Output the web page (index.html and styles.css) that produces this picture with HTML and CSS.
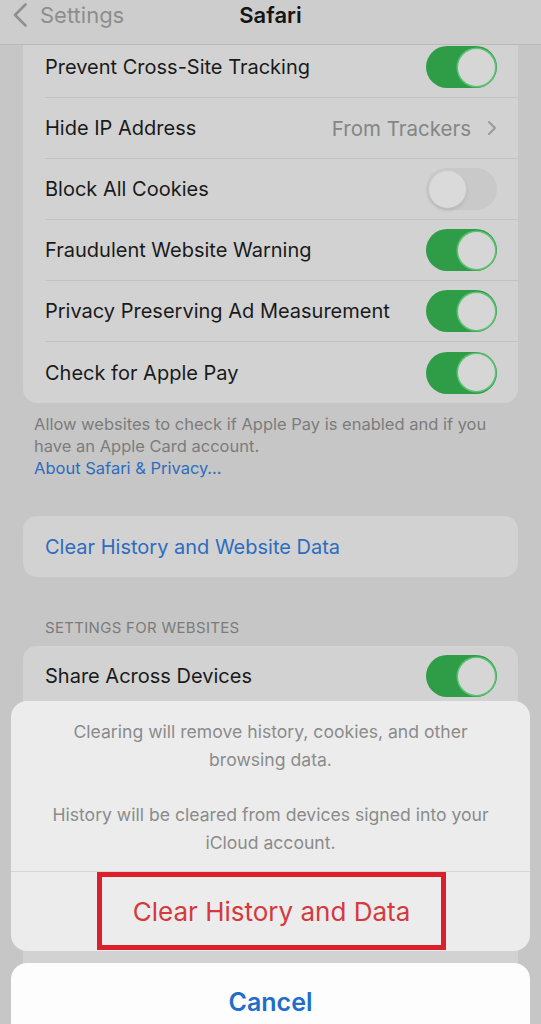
FILE: index.html
```html
<!DOCTYPE html>
<html lang="en">
<head>
<meta charset="utf-8">
<title>Safari</title>
<link rel="stylesheet" href="styles.css">
</head>
<body>
<div class="screen">
  <header class="nav">
    <div class="back">
      <svg class="back-chev" width="16" height="24" viewBox="0 0 16 24"><path d="M13.5 1.5 L3 12 L13.5 22.5" fill="none" stroke="#8f8f8f" stroke-width="2.6" stroke-linecap="round" stroke-linejoin="round"/></svg>
      <span class="back-label">Settings</span>
    </div>
    <div class="nav-title">Safari</div>
  </header>

  <main class="content">
    <section class="card card-first">
      <div class="row"><span class="label">Prevent Cross-Site Tracking</span><span class="toggle on"><span class="knob"></span></span></div>
      <div class="row"><span class="label">Hide IP Address</span><span class="detail">From Trackers<svg class="chev" width="10" height="16" viewBox="0 0 10 16"><path d="M2 2 L8 8 L2 14" fill="none" stroke="#9a9a9a" stroke-width="2" stroke-linecap="round" stroke-linejoin="round"/></svg></span></div>
      <div class="row"><span class="label">Block All Cookies</span><span class="toggle off"><span class="knob"></span></span></div>
      <div class="row"><span class="label">Fraudulent Website Warning</span><span class="toggle on"><span class="knob"></span></span></div>
      <div class="row"><span class="label">Privacy Preserving Ad Measurement</span><span class="toggle on"><span class="knob"></span></span></div>
      <div class="row last"><span class="label">Check for Apple Pay</span><span class="toggle on"><span class="knob"></span></span></div>
    </section>
    <p class="footer">Allow websites to check if Apple Pay is enabled and if you have an Apple Card account.<br><span class="link">About Safari &amp; Privacy…</span></p>

    <section class="card card-action">
      <div class="row last"><span class="label blue">Clear History and Website Data</span></div>
    </section>

    <h2 class="section-head">SETTINGS FOR WEBSITES</h2>
    <section class="card">
      <div class="row"><span class="label">Share Across Devices</span><span class="toggle on"><span class="knob"></span></span></div>
      <div class="row"></div>
      <div class="row"></div>
      <div class="row"></div>
      <div class="row"></div>
      <div class="row last"></div>
    </section>
  </main>

  <div class="sheet">
    <div class="sheet-msg">
      <p>Clearing will remove history, cookies, and other browsing data.</p>
      <p>History will be cleared from devices signed into your iCloud account.</p>
    </div>
    <div class="sheet-btn">
      <span class="highlight">Clear History and Data</span>
    </div>
  </div>
  <div class="cancel">Cancel</div>
</div>
</body>
</html>
```
FILE: styles.css
```css
* { box-sizing: border-box; }
html, body { margin: 0; padding: 0; }
body {
  width: 541px;
  height: 1024px;
  overflow: hidden;
  background: #c6c6c6;
  font-family: "Inter", "Liberation Sans", sans-serif;
}
.screen {
  position: relative;
  width: 541px;
  height: 1024px;
  overflow: hidden;
  background: #c6c6c6;
}
.nav {
  position: relative;
  z-index: 2;
  height: 45px;
  background: #cdcdcd;
  border-bottom: 1px solid #b9b9b9;
  display: flex;
  align-items: flex-start;
  padding: 2px 0 0 12px;
}
.back {
  display: flex;
  align-items: center;
  gap: 12px;
  height: 26px;
}
.back-chev { display: block; }
.back-label {
  font-size: 22px;
  color: #8d8d8d;
}
.nav-title {
  position: absolute;
  left: 0;
  right: 0;
  top: 2px;
  text-align: center;
  font-size: 22px;
  font-weight: 600;
  color: #151515;
  line-height: 26px;
  pointer-events: none;
}
.content {
  padding: 0 23px;
}
.card {
  background: #d2d2d2;
  border-radius: 14px;
  overflow: hidden;
}
.card-first {
  margin-top: -8px;
  border-top-left-radius: 0;
  border-top-right-radius: 0;
}
.row {
  height: 61px;
  margin-left: 22px;
  padding-right: 21px;
  display: flex;
  align-items: center;
  justify-content: space-between;
  border-bottom: 1px solid #c2c2c2;
}
.row.last { border-bottom: none; }
.label {
  font-size: 20px;
  color: #1a1a1a;
}
.label.blue { color: #2d6cbf; }
.detail {
  display: flex;
  align-items: center;
  gap: 16px;
  font-size: 20.5px;
  color: #858585;
  margin-right: 0;
}
.chev { display: block; }
.toggle {
  position: relative;
  width: 71px;
  height: 42px;
  border-radius: 21px;
  flex: none;
}
.toggle.on { background: #2f9d47; }
.toggle.off { background: #c9c9c9; }
.knob {
  position: absolute;
  top: 2.5px;
  width: 37px;
  height: 37px;
  border-radius: 50%;
  background: #d6d6d6;
}
.toggle.on .knob {
  right: 2.5px;
  box-shadow: 0 0 0 1.5px #5cc273;
}
.toggle.off .knob {
  left: 2.5px;
  background: #dadada;
  box-shadow: 0 2px 4px rgba(0,0,0,0.12), 0 0 0 1px #cfcfcf;
}
.footer {
  margin: 0;
  padding: 10px 11px 0 11px;
  font-size: 16.5px;
  line-height: 22px;
  color: #7c7c7c;
}
.link { color: #2d6cbf; }
.card-action { margin-top: 37px; }
.section-head {
  margin: 41px 0 8px 22px;
  font-size: 15px;
  font-weight: 400;
  color: #7b7b7b;
  letter-spacing: 0.3px;
  line-height: 20px;
}
.sheet {
  position: absolute;
  left: 11px;
  right: 11px;
  top: 701px;
  height: 250px;
  background: #ececec;
  border-radius: 16px;
  overflow: hidden;
}
.sheet-msg {
  padding: 17px 26px 14px;
  text-align: center;
  border-bottom: 1px solid #d6d6d6;
}
.sheet-msg p {
  margin: 0;
  font-size: 17.6px;
  line-height: 28px;
  color: #8b8b8b;
}
.sheet-msg p + p { margin-top: 27px; }
.sheet-btn {
  display: flex;
  justify-content: center;
  height: 78px;
}
.highlight {
  width: 349px;
  height: 78px;
  margin-left: 2px;
  border: 5px solid #dd1f2b;
  display: flex;
  align-items: center;
  justify-content: center;
  font-size: 26px;
  color: #d5393c;
}
.cancel {
  position: absolute;
  left: 11px;
  right: 11px;
  top: 963px;
  height: 80px;
  background: #fdfdfd;
  border-radius: 16px;
  display: flex;
  align-items: flex-start;
  justify-content: center;
  padding-top: 24px;
  font-size: 25px;
  font-weight: 600;
  color: #1f6ecb;
  line-height: 30px;
}
```
